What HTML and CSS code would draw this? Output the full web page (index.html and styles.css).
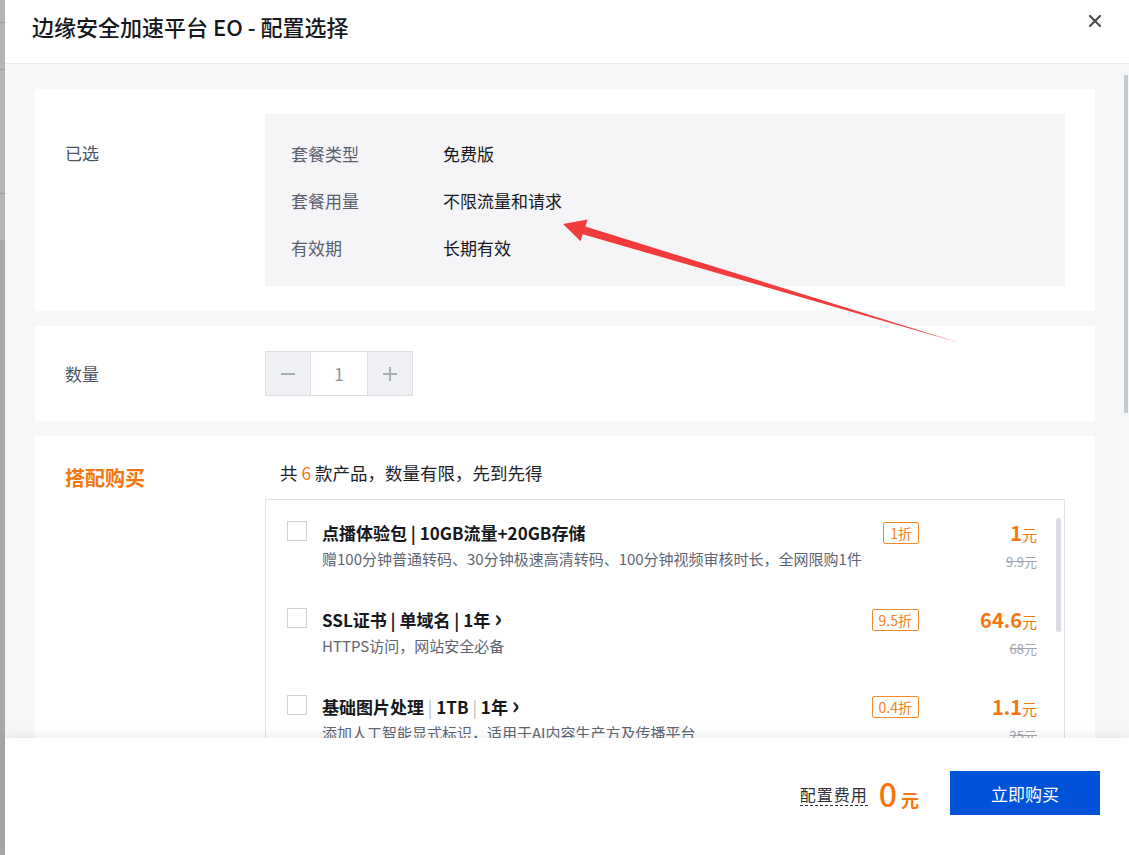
FILE: index.html
```html
<!DOCTYPE html>
<html lang="zh-CN">
<head>
<meta charset="UTF-8">
<meta name="viewport" content="width=device-width, initial-scale=1.0">
<link rel="stylesheet" href="styles.css">
<title>边缘安全加速平台 EO - 配置选择</title>
</head>
<body>
  <div class="screen">
    <!-- page behind the dialog, under the mask -->
    <div class="backdrop">
      <span class="backdrop-line line-a"></span>
      <span class="backdrop-line line-b"></span>
      <span class="backdrop-line line-c"></span>
      <span class="backdrop-dark"></span>
    </div>

    <div class="modal">
      <header class="modal-head">
        <h2 class="modal-title">边缘安全加速平台 EO - 配置选择</h2>
        <button class="close-btn" aria-label="关闭">
          <svg width="12" height="12" viewBox="0 0 12 12">
            <path d="M1 1 L11 11 M11 1 L1 11" stroke="#4d4d4d" stroke-width="2.2" stroke-linecap="square"/>
          </svg>
        </button>
      </header>

      <main class="modal-body">
        <section class="card">
          <div class="card-label label-selected">已选</div>
          <div class="spec-box">
            <div class="spec-row"><span class="spec-key">套餐类型</span><span class="spec-val">免费版</span></div>
            <div class="spec-row"><span class="spec-key">套餐用量</span><span class="spec-val">不限流量和请求</span></div>
            <div class="spec-row"><span class="spec-key">有效期</span><span class="spec-val">长期有效</span></div>
          </div>
        </section>

        <section class="card card-qty">
          <div class="card-label">数量</div>
          <div class="stepper">
            <button class="step-btn" aria-label="减少">
              <svg width="16" height="16" viewBox="0 0 16 16"><path d="M1 8 H15" stroke="#a9adb5" stroke-width="2"/></svg>
            </button>
            <input class="step-input" type="text" value="1">
            <button class="step-btn" aria-label="增加">
              <svg width="16" height="16" viewBox="0 0 16 16"><path d="M1 8 H15 M8 1 V15" stroke="#a9adb5" stroke-width="2"/></svg>
            </button>
          </div>
        </section>

        <section class="card card-bundle">
          <div class="card-label label-bundle">搭配购买</div>
          <div class="bundle">
            <p class="bundle-tip">共 <em>6</em> 款产品，数量有限，先到先得</p>
            <div class="bundle-list">
              <div class="bundle-item">
                <span class="check"></span>
                <div class="item-main">
                  <div class="item-title">点播体验包 <i class="bar">|</i> 10GB流量+20GB存储</div>
                  <div class="item-desc">赠100分钟普通转码、30分钟极速高清转码、100分钟视频审核时长，全网限购1件</div>
                </div>
                <span class="discount">1折</span>
                <div class="item-price">
                  <div class="now"><b>1</b>元</div>
                  <div class="was">9.9元</div>
                </div>
              </div>

              <div class="bundle-item">
                <span class="check"></span>
                <div class="item-main">
                  <div class="item-title">SSL证书 <i class="bar">|</i> 单域名 <i class="bar">|</i> 1年 <span class="chev">&#8250;</span></div>
                  <div class="item-desc">HTTPS访问，网站安全必备</div>
                </div>
                <span class="discount">9.5折</span>
                <div class="item-price">
                  <div class="now"><b>64.6</b>元</div>
                  <div class="was">68元</div>
                </div>
              </div>

              <div class="bundle-item">
                <span class="check"></span>
                <div class="item-main">
                  <div class="item-title">基础图片处理 <i class="sep">|</i> 1TB <i class="sep">|</i> 1年 <span class="chev">&#8250;</span></div>
                  <div class="item-desc">添加人工智能显式标识，适用于AI内容生产方及传播平台</div>
                </div>
                <span class="discount">0.4折</span>
                <div class="item-price">
                  <div class="now"><b>1.1</b>元</div>
                  <div class="was">25元</div>
                </div>
              </div>

              <span class="list-thumb"></span>
            </div>
          </div>
        </section>

        <span class="body-thumb"></span>
      </main>

      <footer class="modal-foot">
        <span class="fee-label">配置费用</span>
        <span class="fee-total"><b>0</b> 元</span>
        <button class="buy-btn">立即购买</button>
      </footer>
    </div>

    <!-- red annotation arrow drawn over the dialog -->
    <svg class="annotation" width="1129" height="855" viewBox="0 0 1129 855">
      <polygon points="563,224 587.5,219.5 585.4,226.6 960,343 582.7,234.3 580.6,241.2" fill="#f23b3b"/>
    </svg>
  </div>
</body>
</html>
```

FILE: styles.css
```css
* {
  margin: 0;
  padding: 0;
  box-sizing: border-box;
}

body {
  font-family: "Noto Sans CJK SC", "Noto Sans", sans-serif;
  color: #1f2329;
  background: #a9aaac;
  width: 1129px;
  height: 855px;
  overflow: hidden;
}

.screen {
  position: relative;
  display: flex;
  height: 855px;
}

/* masked page strip on the left */
.backdrop {
  position: relative;
  width: 5px;
  flex: none;
  background: #b4b5b7;
}
.backdrop-line {
  position: absolute;
  left: 0;
  width: 5px;
  height: 1px;
  background: #9a9b9d;
}
.line-a { top: 22px; }
.line-b { top: 69px; }
.line-c { top: 193px; }
.backdrop-dark {
  position: absolute;
  left: 0;
  top: 240px;
  width: 5px;
  bottom: 0;
  background: #a6a7a9;
}

/* dialog */
.modal {
  width: 1124px;
  flex: none;
  display: flex;
  flex-direction: column;
  background: #fff;
}

.modal-head {
  height: 64px;
  flex: none;
  display: flex;
  align-items: flex-start;
  justify-content: space-between;
  padding: 10px 28px 0 27px;
  border-bottom: 1px solid #e9eaed;
}
.modal-title {
  font-size: 22px;
  font-weight: 500;
  line-height: 32px;
  color: #16181c;
}
.close-btn {
  border: none;
  background: none;
  width: 12px;
  height: 12px;
  margin-top: 5px;
  display: flex;
}

.modal-body {
  position: relative;
  flex: 1;
  overflow: hidden;
  background: #f6f7f9;
  padding: 25px 34px 0 30px;
  display: flex;
  flex-direction: column;
  gap: 15px;
}

.body-thumb {
  position: absolute;
  right: 1px;
  top: 11px;
  width: 4px;
  height: 338px;
  background: #c6c9cf;
}

.card {
  display: grid;
  grid-template-columns: 200px 1fr;
  background: #fff;
  padding: 25px 30px;
  flex: none;
}

.card-label {
  font-size: 17px;
  line-height: 24px;
  color: #4e5664;
}
.label-selected {
  margin-top: 27px;
}

.spec-box {
  background: #f5f5f8;
  padding: 16px 26px 15px;
}
.spec-row {
  display: flex;
  align-items: center;
  height: 47px;
  font-size: 17px;
}
.spec-key {
  width: 152px;
  color: #5a616d;
}
.spec-val {
  color: #17191d;
}

.card-qty {
  align-items: center;
}

.stepper {
  display: flex;
  width: 148px;
  height: 45px;
  border: 1px solid #dcdfe4;
}
.step-btn {
  width: 44px;
  border: none;
  background: #eff0f3;
  display: flex;
  align-items: center;
  justify-content: center;
}
.step-input {
  width: 58px;
  border: none;
  border-left: 1px solid #dcdfe4;
  border-right: 1px solid #dcdfe4;
  text-align: center;
  font-family: inherit;
  font-size: 17px;
  color: #8a9099;
  outline: none;
}

.card-bundle {
  padding-bottom: 0;
}
.label-bundle {
  margin-top: 5px;
  font-size: 20px;
  font-weight: 700;
  color: #f5760f;
}

.bundle-tip {
  font-size: 17.5px;
  line-height: 24px;
  color: #1f2329;
  padding-left: 15px;
  margin-bottom: 14px;
}
.bundle-tip em {
  font-style: normal;
  color: #f5760f;
}

.bundle-list {
  position: relative;
  height: 300px;
  overflow: hidden;
  border: 1px solid #dfe1e6;
}
.list-thumb {
  position: absolute;
  right: 3px;
  top: 18px;
  width: 5px;
  height: 114px;
  border-radius: 3px;
  background: #d9dce1;
}

.bundle-item {
  display: flex;
  align-items: flex-start;
  height: 87px;
  padding: 20px 27px 0 21px;
}
.check {
  width: 20px;
  height: 20px;
  border: 1px solid #cfd3d9;
  background: #fff;
  margin-top: 1px;
  flex: none;
}
.item-main {
  flex: 1;
  margin-left: 15px;
}
.item-title {
  font-size: 17px;
  font-weight: 700;
  line-height: 26px;
  color: #16181c;
}
.item-title i {
  font-style: normal;
}
.item-title .sep {
  font-weight: 400;
  color: #b8bcc3;
}
.chev {
  font-size: 24px;
  line-height: 20px;
  font-weight: 700;
}
.item-desc {
  margin-top: 2px;
  font-size: 15px;
  line-height: 22px;
  color: #5e6572;
}

.discount {
  flex: none;
  margin-top: 2px;
  height: 22px;
  padding: 0 6px;
  border: 1px solid #f08a2c;
  border-radius: 2px;
  font-size: 14px;
  line-height: 20px;
  color: #f0822a;
}

.item-price {
  width: 100px;
  margin-left: 18px;
  text-align: right;
  flex: none;
}
.now {
  font-size: 15px;
  line-height: 26px;
  color: #f5760f;
}
.now b {
  font-size: 20px;
  font-weight: 700;
}
.was {
  margin-top: 4px;
  font-size: 13px;
  line-height: 20px;
  color: #a0a5ae;
  text-decoration: line-through;
}

/* bottom bar */
.modal-foot {
  position: relative;
  height: 117px;
  flex: none;
  display: flex;
  align-items: center;
  justify-content: flex-end;
  padding: 0 29px 7px 0;
  background: #fff;
  box-shadow: 0 -4px 10px rgba(0, 0, 0, 0.06);
}
.fee-label {
  font-size: 16px;
  letter-spacing: 1px;
  color: #2b2f36;
  border-bottom: 1px dashed #2b2f36;
  line-height: 21px;
  margin-top: 4px;
}
.fee-total {
  margin-left: 11px;
  font-size: 18px;
  font-weight: 700;
  color: #f5760f;
}
.fee-total b {
  font-size: 32px;
  font-weight: 500;
}
.buy-btn {
  margin-left: 31px;
  width: 150px;
  height: 44px;
  border: none;
  background: #0052d9;
  color: #fff;
  font-family: inherit;
  font-size: 17px;
}

.annotation {
  position: absolute;
  left: 0;
  top: 0;
  pointer-events: none;
}
```
